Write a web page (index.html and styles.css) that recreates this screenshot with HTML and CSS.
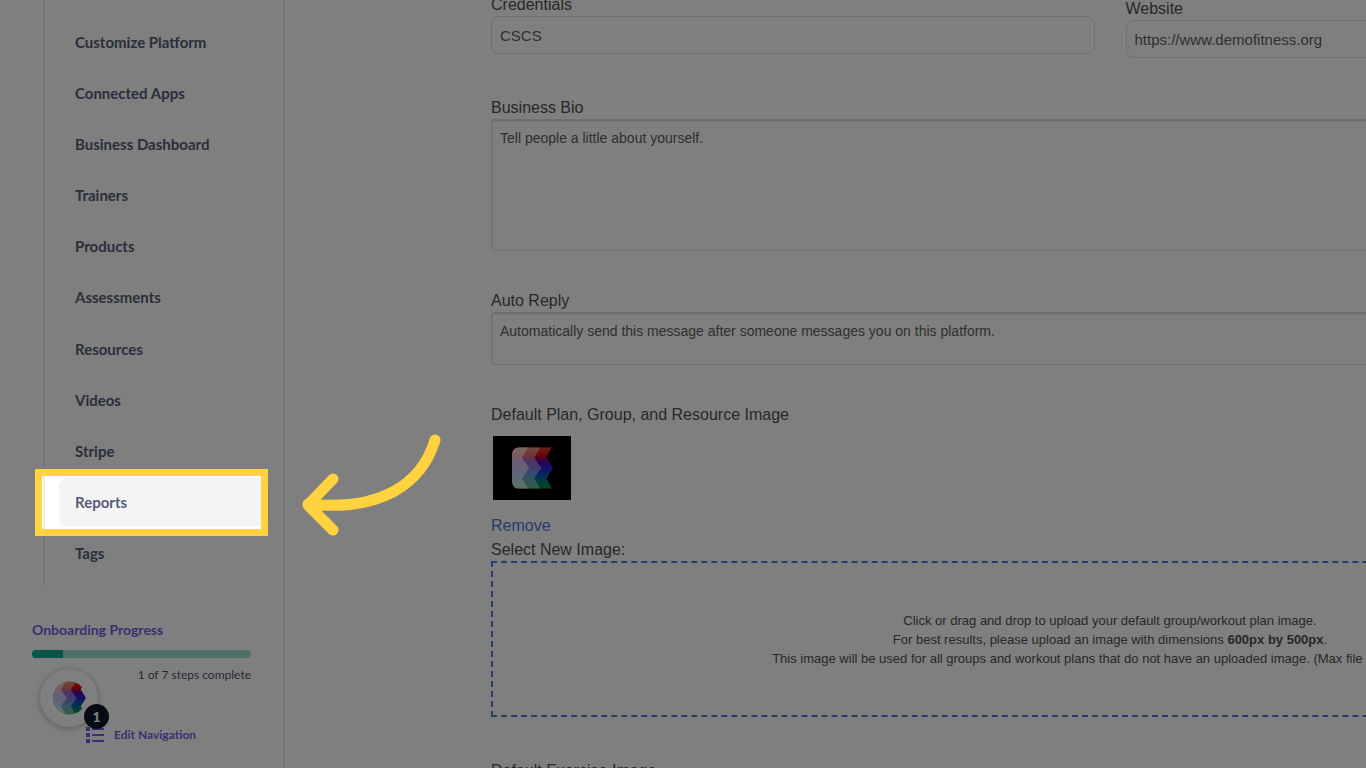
FILE: index.html
```html
<!DOCTYPE html>
<html lang="en">

<head>
    <meta charset="UTF-8">
    <meta name="viewport" content="width=device-width, initial-scale=1.0">
    <title>Business Settings</title>
    <link rel="stylesheet" href="styles.css">
</head>

<body>
    <!-- logo shared by the thumbnail and the launcher -->
    <svg class="defs" width="0" height="0" aria-hidden="true">
        <defs>
            <linearGradient id="spectrum" x1="0" y1="0" x2="0" y2="1">
                <stop offset="0" stop-color="#d9452c" />
                <stop offset="0.2" stop-color="#d2080c" />
                <stop offset="0.34" stop-color="#5b00a8" />
                <stop offset="0.5" stop-color="#2c22d0" />
                <stop offset="0.7" stop-color="#085fb0" />
                <stop offset="0.88" stop-color="#008c5c" />
                <stop offset="1" stop-color="#00803c" />
            </linearGradient>
            <clipPath id="round">
                <circle cx="62" cy="63" r="62" />
            </clipPath>
        </defs>
        <symbol id="logo" viewBox="0 0 124 126">
            <path fill="url(#spectrum)" d="M24 0H121L104 30L124 63L104 95L121 126H24Q0 126 0 102V24Q0 0 24 0Z" />
            <path fill="#fff" fill-opacity="0.4" d="M24 0H86L67 32L89 63L67 94L86 126H24Q0 126 0 102V24Q0 0 24 0Z" />
            <path fill="#fff" fill-opacity="0.55" d="M24 0H49L30 32L52 63L30 94L49 126H24Q0 126 0 102V24Q0 0 24 0Z" />
        </symbol>
    </svg>

    <div class="container">
        <aside class="sidebar">
            <nav>
                <ul class="menu">
                    <li><a href="#">Customize Platform</a></li>
                    <li><a href="#">Connected Apps</a></li>
                    <li><a href="#">Business Dashboard</a></li>
                    <li><a href="#">Trainers</a></li>
                    <li><a href="#">Products</a></li>
                    <li><a href="#">Assessments</a></li>
                    <li><a href="#">Resources</a></li>
                    <li><a href="#">Videos</a></li>
                    <li><a href="#">Stripe</a></li>
                    <li class="current">
                        <a href="#">Reports</a>
                        <div class="spotlight"></div>
                        <svg class="arrow" viewBox="0 0 150 115" aria-hidden="true">
                            <path d="M139 15C126 58 86 87 12 79M37 54L12 80L37 105" />
                        </svg>
                    </li>
                    <li><a href="#">Tags</a></li>
                </ul>
            </nav>

            <div class="onboarding">
                <label for="steps">Onboarding Progress</label>
                <progress id="steps" value="1" max="7"></progress>
                <p>1 of 7 steps complete</p>
            </div>

            <a class="edit-nav" href="#">
                <svg viewBox="0 0 18 16" aria-hidden="true">
                    <path d="M0 0h4v4H0zM6 1h12v2H6zM0 6h4v4H0zM6 7h12v2H6zM0 12h4v4H0zM6 13h12v2H6z" />
                </svg>
                Edit Navigation
            </a>

            <button class="launcher" type="button" aria-label="Open checklist">
                <svg viewBox="0 0 124 126" aria-hidden="true">
                    <g clip-path="url(#round)">
                        <use href="#logo" width="124" height="126" />
                    </g>
                </svg>
                <span class="badge">1</span>
            </button>
        </aside>

        <main>
            <form class="settings">
                <div class="row">
                    <div class="field">
                        <label for="credentials">Credentials</label>
                        <input type="text" id="credentials" value="CSCS">
                    </div>
                    <div class="field">
                        <label for="website">Website</label>
                        <input type="text" id="website" value="https://www.demofitness.org">
                    </div>
                </div>

                <div class="field">
                    <label for="bio">Business Bio</label>
                    <textarea id="bio" class="tall" placeholder="Tell people a little about yourself."></textarea>
                </div>

                <div class="field">
                    <label for="reply">Auto Reply</label>
                    <textarea id="reply" placeholder="Automatically send this message after someone messages you on this platform."></textarea>
                </div>

                <div class="field">
                    <span class="title">Default Plan, Group, and Resource Image</span>
                    <div class="thumb">
                        <svg viewBox="0 0 124 126" role="img" aria-label="Default image">
                            <use href="#logo" width="124" height="126" />
                        </svg>
                    </div>
                    <a class="remove" href="#">Remove</a>
                    <span class="title">Select New Image:</span>
                    <button class="dropzone" type="button">
                        Click or drag and drop to upload your default group/workout plan image.<br>
                        For best results, please upload an image with dimensions <b>600px by 500px</b>.<br>
                        This image will be used for all groups and workout plans that do not have an uploaded image. (Max file size is 10MB.)
                    </button>
                </div>

                <div class="field">
                    <span class="title">Default Exercise Image</span>
                </div>
            </form>
        </main>
    </div>
</body>

</html>
```
FILE: styles.css
```css
* {
    padding: 0;
    margin: 0;
    box-sizing: border-box;
}

html,
body {
    height: 100%;
    overflow: hidden;
}

body {
    background-color: #fff;
    color: #505050;
    font-family: "Liberation Sans", Arial, sans-serif;
    font-size: 16px;
}

.defs {
    position: absolute;
}

.container {
    display: flex;
    height: 100%;
}

/* sidebar */
.sidebar {
    position: relative;
    flex: none;
    width: 285px;
    border-right: 2px solid #ececf0;
    font-family: Lato, sans-serif;
}

.menu {
    display: grid;
    grid-auto-rows: 1fr;
    height: 586px;
    margin-left: 43px;
    padding: 16px 14px 7px;
    border-left: 2px solid #ececf0;
    list-style: none;
}

.menu li {
    display: flex;
    align-items: center;
    position: relative;
}

.menu a {
    flex: 1;
    padding: 0 16px;
    border-radius: 8px;
    color: #565c78;
    font-size: 15px;
    font-weight: bold;
    line-height: 48px;
    text-decoration: none;
}

.menu .current a {
    background-color: #f4f4f4;
}

/* dims everything around the current item */
.spotlight {
    position: absolute;
    top: -8px;
    left: -24px;
    z-index: 10;
    width: 233px;
    height: 67px;
    border: 7px solid #ffd23f;
    box-shadow: 0 0 0 9999px rgba(0, 0, 0, 0.5);
    pointer-events: none;
}

.arrow {
    position: absolute;
    top: -52px;
    left: 237px;
    z-index: 11;
    width: 150px;
    height: 115px;
    fill: none;
    stroke: #ffd23f;
    stroke-width: 11;
    stroke-linecap: round;
    stroke-linejoin: round;
}

.onboarding {
    margin: 34px 32px 0;
}

.onboarding label {
    display: block;
    color: #7a5ce0;
    font-size: 14px;
    font-weight: bold;
    line-height: 20px;
}

.onboarding progress {
    display: block;
    width: 100%;
    height: 8px;
    margin: 10px 0 9px;
    border-radius: 4px;
    overflow: hidden;
    appearance: none;
}

.onboarding progress::-webkit-progress-bar {
    background-color: #a0dcd0;
}

.onboarding progress::-webkit-progress-value {
    background-color: #10a88c;
}

.onboarding p {
    color: #505468;
    font-size: 12px;
    line-height: 16px;
    text-align: right;
}

.edit-nav {
    display: flex;
    align-items: center;
    gap: 10px;
    margin: 42px 0 0 86px;
    color: #7a5ce0;
    font-size: 12px;
    font-weight: bold;
    line-height: 20px;
    text-decoration: none;
}

.edit-nav svg {
    width: 18px;
    height: 16px;
    fill: currentColor;
}

.launcher {
    display: flex;
    align-items: center;
    justify-content: center;
    position: absolute;
    top: 669px;
    left: 40px;
    width: 58px;
    height: 58px;
    border: none;
    border-radius: 50%;
    background-color: #fff;
    box-shadow: 0 1px 6px rgba(0, 0, 0, 0.3);
}

.launcher svg {
    width: 33px;
    height: 34px;
}

.badge {
    position: absolute;
    right: -11px;
    bottom: -2px;
    width: 25px;
    height: 25px;
    border-radius: 50%;
    background-color: #0f1826;
    color: #fff;
    font-family: Lato, sans-serif;
    font-size: 14px;
    font-weight: 900;
    line-height: 25px;
    text-align: center;
}

/* form */
main {
    flex: 1;
    min-width: 0;
    padding-left: 206px;
    overflow: hidden;
}

.settings {
    display: flex;
    flex-direction: column;
    gap: 39px;
    min-width: 1238px;
    margin-top: -6px;
}

.row {
    display: flex;
    gap: 31px;
}

.field {
    display: flex;
    flex: 1;
    flex-direction: column;
}

.field:last-child {
    margin-top: 4px;
}

.field label,
.title,
.remove {
    font-size: 16px;
    line-height: 22px;
}

input,
textarea {
    width: 100%;
    padding: 8px;
    border: 1px solid #dedede;
    background-color: #fff;
    color: #606060;
    font-family: inherit;
    font-size: 15px;
    line-height: 18px;
    resize: none;
}

input {
    height: 38px;
    border-radius: 8px;
}

textarea {
    height: 53px;
    padding-top: 9px;
    border-radius: 3px;
    box-shadow: inset 0 1px 2px rgba(0, 0, 0, 0.2);
    font-size: 14px;
}

textarea.tall {
    height: 132px;
}

textarea::placeholder {
    color: #606060;
}

.thumb {
    display: flex;
    align-items: center;
    justify-content: center;
    width: 78px;
    height: 64px;
    margin: 10px 2px 15px;
    background-color: #000;
}

.thumb svg {
    width: 41px;
    height: 42px;
}

.remove {
    align-self: flex-start;
    margin-bottom: 2px;
    color: #5078d8;
    text-decoration: none;
}

.dropzone {
    height: 156px;
    border: 2px dashed #5078d8;
    background-color: #fff;
    color: #505050;
    font-family: inherit;
    font-size: 13px;
    line-height: 19px;
}
```
